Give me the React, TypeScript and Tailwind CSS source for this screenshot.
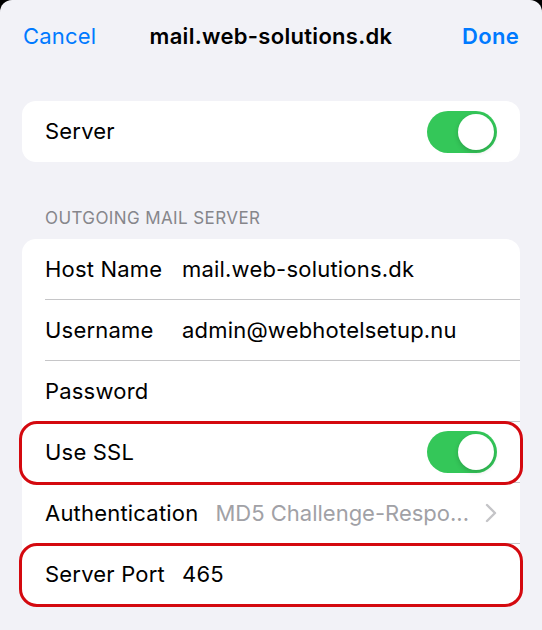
import React from "react";

const Toggle = () => (
  <div className="w-[70px] h-[42px] rounded-full bg-[#34c759] p-[3px] flex justify-end">
    <div className="w-[36px] h-[36px] rounded-full bg-white shadow-[0_2px_5px_rgba(0,0,0,0.18)]" />
  </div>
);

const Row = ({
  label,
  value,
  muted,
  chevron,
  toggle,
  divider = true,
  highlight,
}: {
  label: string;
  value?: string;
  muted?: boolean;
  chevron?: boolean;
  toggle?: boolean;
  divider?: boolean;
  highlight?: boolean;
}) => (
  <div className="relative pl-[23px]">
    <div
      className={`h-[61px] flex items-center pr-[23px] ${
        divider ? "border-b border-[#c6c6c8]" : ""
      }`}
    >
      <span className="min-w-[120px] mr-[17px] text-black whitespace-nowrap">{label}</span>
      {value && (
        <span
          className={`flex-1 whitespace-nowrap ${
            muted ? "text-[#a1a1a6] tracking-[0px]" : "text-black"
          }`}
        >
          {value}
        </span>
      )}
      {!value && <span className="flex-1" />}
      {chevron && (
        <svg width="12" height="20" viewBox="0 0 12 20" className="ml-[12px] shrink-0">
          <path d="M2 2l8 8-8 8" fill="none" stroke="#c4c4c7" strokeWidth="2.4" strokeLinecap="round" strokeLinejoin="round" />
        </svg>
      )}
      {toggle && <Toggle />}
    </div>
    {/* red annotation box */}
    {highlight && (
      <div className="absolute left-[-3px] right-[-3px] top-[-1px] bottom-[-2px] border-[3px] border-[#d4090f] rounded-[18px] pointer-events-none" />
    )}
  </div>
);

export default function App() {
  return (
    <div className="bg-black w-[542px] h-[630px]" style={{ fontFamily: "Inter, 'Liberation Sans', sans-serif" }}>
      <div className="bg-[#f2f2f7] h-[630px] rounded-t-[12px] overflow-hidden text-[22px] tracking-[0.2px]">
        {/* nav bar */}
        <div className="h-[75px] grid grid-cols-[1fr_auto_1fr] items-center px-[23px] pb-[2px]">
          <span className="text-[#007aff]">Cancel</span>
          <span className="font-semibold text-black tracking-[0.3px]">mail.web-solutions.dk</span>
          <span className="text-[#007aff] font-semibold text-right tracking-[0.3px]">Done</span>
        </div>

        <div className="px-[22px]">
          <div className="mt-[26px] bg-white rounded-[14px]">
            <Row label="Server" toggle divider={false} />
          </div>

          <div className="mt-[45px] pl-[23px] text-[17px] text-[#86868b] tracking-[0.4px] leading-[22px]">
            OUTGOING MAIL SERVER
          </div>

          <div className="mt-[10px] bg-white rounded-[14px]">
            <Row label="Host Name" value="mail.web-solutions.dk" />
            <Row label="Username" value="admin@webhotelsetup.nu" />
            <Row label="Password" />
            <Row label="Use SSL" toggle highlight />
            <Row label="Authentication" value="MD5 Challenge-Respo..." muted chevron />
            <Row label="Server Port" value="465" divider={false} highlight />
          </div>
        </div>
      </div>
    </div>
  );
}
